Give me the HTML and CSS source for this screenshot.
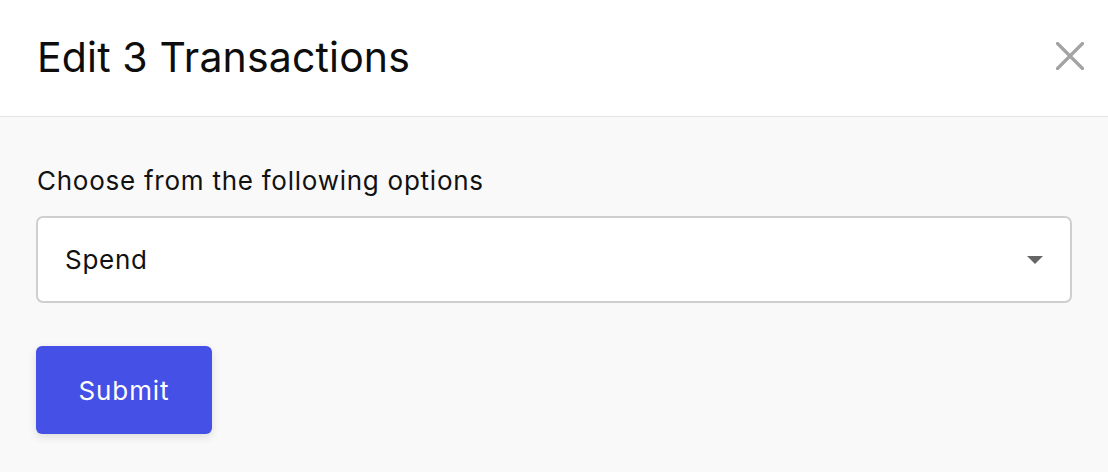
FILE: index.html
```html
<!DOCTYPE html>
<html lang="en">
<head>
<meta charset="utf-8">
<title>Edit 3 Transactions</title>
<link rel="stylesheet" href="styles.css">
</head>
<body>
<div class="modal">
  <header class="modal-header">
    <h1 class="modal-title">Edit 3 Transactions</h1>
    <button class="close-btn" aria-label="Close">
      <svg width="28" height="28" viewBox="0 0 28 28"><path d="M1.5 1.5 L26.5 26.5 M26.5 1.5 L1.5 26.5" stroke="#a3a3a3" stroke-width="3.2" stroke-linecap="round"/></svg>
    </button>
  </header>
  <main class="modal-body">
    <label class="field-label">Choose from the following options</label>
    <div class="select">
      <span class="select-value">Spend</span>
      <span class="caret"></span>
    </div>
    <button class="submit-btn">Submit</button>
  </main>
</div>
</body>
</html>
```
FILE: styles.css
```css
* { box-sizing: border-box; }
html, body { margin: 0; padding: 0; height: 100%; }
body {
  font-family: Inter, "Noto Sans", sans-serif;
  color: #111;
  background: #f9f9f9;
}
.modal { display: flex; flex-direction: column; min-height: 100%; }
.modal-header {
  height: 117px;
  background: #fff;
  border-bottom: 1px solid #e3e3e3;
  display: flex;
  align-items: center;
  justify-content: space-between;
  padding: 0 24px 0 37px;
}
.modal-title {
  margin: 0 0 2px 0;
  font-size: 41px;
  font-weight: 400;
  letter-spacing: 0.15px;
  color: #0d0d0d;
}
.close-btn {
  background: none;
  border: 0;
  padding: 0;
  width: 28px;
  height: 28px;
  display: flex;
  margin-bottom: 5px;
}
.modal-body {
  flex: 1;
  padding: 48px 36px 0 36px;
  display: flex;
  flex-direction: column;
  align-items: flex-start;
}
.field-label {
  font-size: 26px;
  line-height: 32px;
  letter-spacing: 0.75px;
  padding-left: 1px;
  color: #111;
}
.select {
  margin-top: 19px;
  width: 1036px;
  height: 87px;
  background: #fff;
  border: 2px solid #cfcfcf;
  border-radius: 7px;
  display: flex;
  align-items: center;
  justify-content: space-between;
  padding: 0 27px 0 27px;
}
.select-value { font-size: 26px; letter-spacing: 0.75px; color: #111; }
.caret {
  width: 0; height: 0;
  border-left: 8px solid transparent;
  border-right: 8px solid transparent;
  border-top: 8px solid #666;
}
.submit-btn {
  margin-top: 43px;
  width: 176px;
  height: 88px;
  background: #4550e6;
  color: #fff;
  border: 0;
  border-radius: 6px;
  font-family: Inter, "Noto Sans", sans-serif;
  font-size: 26px;
  letter-spacing: 0.9px;
  box-shadow: 0 3px 8px rgba(0,0,0,0.12);
}
```
